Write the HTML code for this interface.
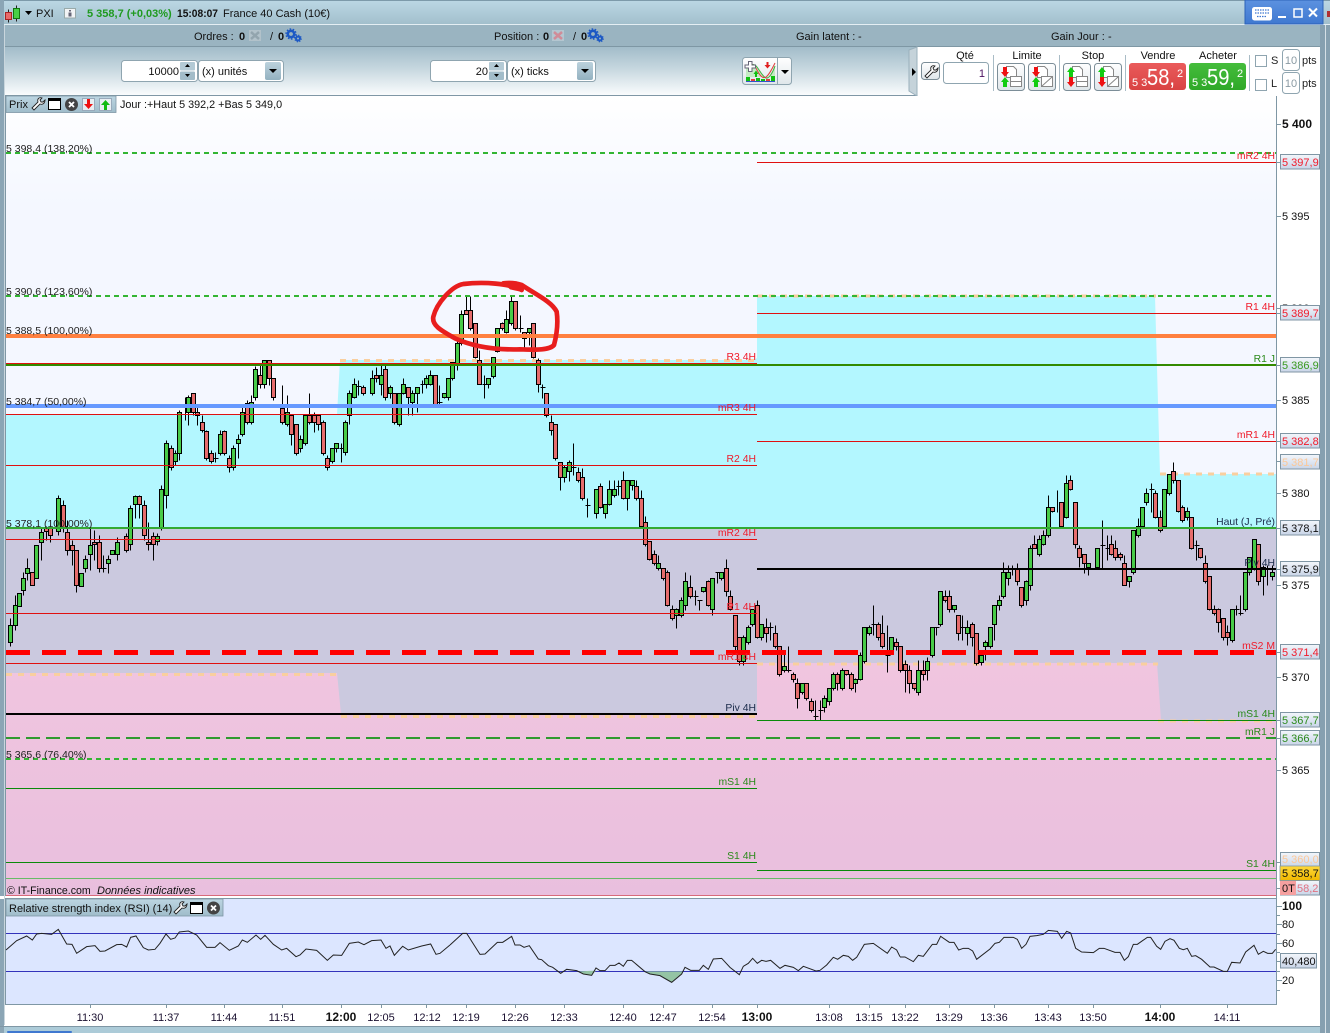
<!DOCTYPE html>
<html><head><meta charset="utf-8"><title>PXI</title>
<style>
html,body{margin:0;padding:0;background:#fff;width:1330px;height:1033px;overflow:hidden}
svg{display:block;font-family:"Liberation Sans",Arial,sans-serif;font-size:11px}
.b{font-weight:bold}
.r{fill:#f01a2a;text-anchor:end;font-size:10.4px}
.g{fill:#2a8a1a;text-anchor:end;font-size:10.4px}
.d{fill:#1a2a4a;text-anchor:end;font-size:10.4px}
.l{fill:#222;font-size:10.5px}
.t{text-anchor:middle;fill:#1a1030}
.c{text-anchor:middle;fill:#111}
.ax{fill:#111}
</style></head><body>
<svg width="1330" height="1033" viewBox="0 0 1330 1033" xmlns="http://www.w3.org/2000/svg">
<defs>
<linearGradient id="tb" x1="0" y1="0" x2="0" y2="1"><stop offset="0" stop-color="#bcd8e5"/><stop offset="1" stop-color="#a2bfcc"/></linearGradient>
<linearGradient id="tl" x1="0" y1="0" x2="0" y2="1"><stop offset="0" stop-color="#a2bcc9"/><stop offset=".45" stop-color="#c6d7df"/><stop offset="1" stop-color="#fafcfd"/></linearGradient>
<linearGradient id="tab" x1="0" y1="0" x2="0" y2="1"><stop offset="0" stop-color="#bdd6e2"/><stop offset="1" stop-color="#9fbcca"/></linearGradient>
<linearGradient id="btn" x1="0" y1="0" x2="0" y2="1"><stop offset="0" stop-color="#ffffff"/><stop offset="1" stop-color="#dfe6ea"/></linearGradient>
<linearGradient id="dd" x1="0" y1="0" x2="0" y2="1"><stop offset="0" stop-color="#bcd2dd"/><stop offset="1" stop-color="#93b1c0"/></linearGradient>
<linearGradient id="rb" x1="0" y1="0" x2="0" y2="1"><stop offset="0" stop-color="#ea5b5b"/><stop offset="1" stop-color="#d94343"/></linearGradient>
<linearGradient id="gb" x1="0" y1="0" x2="0" y2="1"><stop offset="0" stop-color="#45bd3c"/><stop offset="1" stop-color="#2fa828"/></linearGradient>
<linearGradient id="bx" x1="0" y1="0" x2="0" y2="1"><stop offset="0" stop-color="#f3f6fb"/><stop offset="1" stop-color="#c9d5e8"/></linearGradient>
<linearGradient id="bg" x1="0" y1="0" x2="0" y2="1"><stop offset="0" stop-color="#ffffff"/><stop offset="1" stop-color="#f4f7ff"/></linearGradient>
<linearGradient id="pk" x1="0" y1="0" x2="0" y2="1"><stop offset="0" stop-color="#f0c5df"/><stop offset="1" stop-color="#e9bfde"/></linearGradient>
<linearGradient id="blue" x1="0" y1="0" x2="0" y2="1"><stop offset="0" stop-color="#5c92e0"/><stop offset="1" stop-color="#3f78d0"/></linearGradient>
<linearGradient id="yl" x1="0" y1="0" x2="0" y2="1"><stop offset="0" stop-color="#ffd83a"/><stop offset="1" stop-color="#f0b800"/></linearGradient>
</defs>

<!-- window chrome -->
<rect width="1330" height="1033" fill="#fff"/>
<rect width="1330" height="24" fill="url(#tb)"/>
<rect y="24" width="1330" height="1" fill="#e4eef3"/>
<rect y="25" width="1330" height="21" fill="#9ab4c1"/>
<rect y="46" width="1330" height="1" fill="#7e97a4"/>
<rect y="47" width="1330" height="48" fill="url(#tl)"/>
<rect y="95" width="1276" height="1" fill="#7f97a5"/>
<rect x="0" y="0" width="1330" height="1" fill="#7d9aaa"/>
<rect x="0" y="0" width="4" height="1033" fill="#8ba5b5"/>
<rect x="4" y="25" width="1" height="1000" fill="#c9d6dd"/>
<rect x="1320" y="25" width="10" height="1008" fill="#86a0b0"/>
<rect x="1325" y="25" width="1" height="1008" fill="#d5e0e6"/>

<!-- right white panel -->
<path d="M909 50l9-3h402v49H918l-9-5z" fill="#fff"/>
<path d="M909 50l8-3v49l-8-5z" fill="#c5d3da" stroke="#9ab0bc"/>
<path d="M912 68l4 4-4 4z" fill="#000"/>
<rect x="1276" y="96" width="44" height="937" fill="#fff"/>

<!-- header text -->
<g>
<path d="M8.500 9.500v13M16.500 5.500v16" stroke="#222" stroke-width="1"/>
<rect x="5.500" y="12.500" width="6" height="7" fill="#e86a6a" stroke="#a22"/>
<rect x="13.500" y="8.500" width="6" height="10" fill="#47d047" stroke="#171"/>
<path d="M25 11h7l-3.500 4z" fill="#000"/>
<rect x="64.500" y="8.500" width="11" height="9.500" fill="#f2f4f5" stroke="#9aa"/>
<rect x="69" y="10" width="2" height="1.500" fill="#667"/><rect x="68.500" y="12.500" width="3" height="4" fill="#667"/>
<text x="36" y="17" fill="#111">PXI</text>
<text x="87" y="17" class="b" fill="#1f9a1f">5 358,7 (+0,03%)</text>
<text x="177" y="17" class="b" fill="#111" textLength="41" lengthAdjust="spacingAndGlyphs">15:08:07</text>
<text x="223" y="17" fill="#111">France 40 Cash (10€)</text>
</g>

<!-- title buttons -->
<rect x="1245" y="0" width="78" height="24" fill="url(#blue)" stroke="#2c62b8"/>
<rect x="1252" y="7" width="20" height="13.500" rx="2.500" fill="#fff"/>
<path d="M1255 10h14M1255 13h14M1257 16.500h10" stroke="#3f78d0" stroke-width="1.200" stroke-dasharray="1.500 1"/>
<path d="M1278 17h8" stroke="#fff" stroke-width="2"/>
<rect x="1294" y="9" width="8" height="8" fill="none" stroke="#fff" stroke-width="1.500"/>
<path d="M1309 8.500l8 8M1317 8.500l-8 8" stroke="#fff" stroke-width="2"/>
<rect x="1327" y="11" width="3" height="6" fill="#b03030"/>

<!-- row 2 -->
<g fill="#111">
<text x="194" y="40">Ordres :</text><text x="239" y="40" class="b">0</text><text x="270" y="40">/</text><text x="278" y="40" class="b">0</text>
<text x="494" y="40">Position :</text><text x="543" y="40" class="b">0</text><text x="573" y="40">/</text><text x="581" y="40" class="b">0</text>
<text x="796" y="40">Gain latent :</text><text x="858" y="40">-</text>
<text x="1051" y="40">Gain Jour :</text><text x="1108" y="40">-</text>
</g>
<rect x="249" y="30" width="12" height="11" fill="#b2c2ca"/>
<path d="M251 32l8 7M259 32l-8 7" stroke="#93a5ae" stroke-width="2.500"/>
<rect x="552" y="30" width="12" height="11" fill="#b4c6d0"/>
<path d="M554 32l8 7M562 32l-8 7" stroke="#d08c98" stroke-width="2.500"/>
<g fill="none" stroke="#1c58c4">
<circle cx="291" cy="34" r="3.200" stroke-width="2.600"/><circle cx="291" cy="34" r="5" stroke-width="1.400" stroke-dasharray="1.600 1.540"/>
<circle cx="298" cy="38.500" r="2" stroke-width="2"/><circle cx="298" cy="38.500" r="3.300" stroke-width="1.100" stroke-dasharray="1.300 1.300"/>
<circle cx="593" cy="34" r="3.200" stroke-width="2.600"/><circle cx="593" cy="34" r="5" stroke-width="1.400" stroke-dasharray="1.600 1.540"/>
<circle cx="600" cy="38.500" r="2" stroke-width="2"/><circle cx="600" cy="38.500" r="3.300" stroke-width="1.100" stroke-dasharray="1.300 1.300"/>
</g>

<!-- row 3 left inputs -->
<rect x="121.500" y="60.500" width="76" height="21" rx="3" fill="#fff" stroke="#8fa5b0"/>
<text x="179" y="75" text-anchor="end" fill="#111">10000</text>
<rect x="180" y="62" width="15" height="8.500" rx="1" fill="#b4cad5"/><rect x="180" y="71.500" width="15" height="8.500" rx="1" fill="#a2bcc9"/>
<path d="M185 67h5l-2.500-3zM185 74h5l-2.500 3z" fill="#000"/>
<rect x="198.500" y="60.500" width="85" height="21" rx="3" fill="#fff" stroke="#8fa5b0"/>
<text x="202" y="75" fill="#111">(x) unités</text>
<rect x="265" y="62" width="16" height="18" rx="2" fill="url(#dd)"/>
<path d="M269 69h8l-4 4z" fill="#000"/>
<rect x="430.500" y="60.500" width="76" height="21" rx="3" fill="#fff" stroke="#8fa5b0"/>
<text x="488" y="75" text-anchor="end" fill="#111">20</text>
<rect x="489" y="62" width="15" height="8.500" rx="1" fill="#b4cad5"/><rect x="489" y="71.500" width="15" height="8.500" rx="1" fill="#a2bcc9"/>
<path d="M494 67h5l-2.500-3zM494 74h5l-2.500 3z" fill="#000"/>
<rect x="507.500" y="60.500" width="88" height="21" rx="3" fill="#fff" stroke="#8fa5b0"/>
<text x="511" y="75" fill="#111">(x) ticks</text>
<rect x="577" y="62" width="16" height="18" rx="2" fill="url(#dd)"/>
<path d="M581 69h8l-4 4z" fill="#000"/>

<!-- indicator button -->
<rect x="742.500" y="57.500" width="49" height="27" rx="3" fill="url(#btn)" stroke="#8fa5b0"/>
<path d="M777.500 58v26" stroke="#8fa5b0"/>
<path d="M781 70h8l-4 4z" fill="#000"/>
<path d="M746 68c4-4 8-5 11-1s6 10 9 11 7-6 9-12v11h-29z" fill="#c4ecc4" stroke="none"/>
<path d="M746 68c4-4 8-5 11-1s6 10 9 11 7-6 9-12" fill="none" stroke="#3cb03c"/>
<path d="M746 66c5-3 8-2 11 4s6 9 9 7 6-8 9-14" fill="none" stroke="#e04040"/>
<path d="M746 81.500h29" stroke="#3355cc"/>
<path d="M746 77h4v4h-4zM756 78h4v3h-4zM761 79h4v2h-4zM771 76h4v5h-4z" fill="#10c010"/>
<path d="M751 79h4v2h-4zM766 79h4v2h-4z" fill="#e04040"/>
<path d="M748.500 61.500h3.500v3.500h3.500v3h-3.500v3.500h-3.500v-3.500h-3.500v-3h3.500z" fill="#fff" stroke="#667"/>
<path d="M755 77v-3h-1.500l2.500-3.500 2.500 3.500h-1.500v3z" fill="#10c010"/>
<path d="M766.500 62v3h-2l3 3.500 3-3.500h-2v-3z" fill="#e02020"/>

<!-- order panel -->
<rect x="921.500" y="62.500" width="18" height="17" rx="3" fill="url(#btn)" stroke="#7c8e98"/>
<path d="M925 76l6-6c-1-3 1-5 4-4l-2 2 1 2 2 0 2-2c0 3-2 5-5 4l-6 6z" fill="#fff" stroke="#222" stroke-width=".9"/>
<g fill="#111" text-anchor="middle">
<text x="965" y="59">Qté</text><text x="1027" y="59">Limite</text><text x="1093" y="59">Stop</text><text x="1158" y="59">Vendre</text><text x="1218" y="59">Acheter</text>
</g>
<rect x="943.500" y="62.500" width="45" height="21" rx="3" fill="#fff" stroke="#8fa5b0"/>
<text x="985" y="77" text-anchor="end" fill="#4a1060">1</text>
<path d="M993.500 55v36M1059.500 55v36M1125.500 55v36M1249.500 55v36" stroke="#a9bcc6"/>
<g fill="url(#btn)" stroke="#7c8e98">
<rect x="997.500" y="63.500" width="27" height="27" rx="3"/><rect x="1028.500" y="63.500" width="27" height="27" rx="3"/>
<rect x="1063.500" y="63.500" width="27" height="27" rx="3"/><rect x="1094.500" y="63.500" width="27" height="27" rx="3"/>
</g>
<g fill="#fff" stroke="#888">
<path d="M1006.500 66.500h7l3 3v8h-10zM1037.500 66.500h7l3 3v8h-10zM1072.500 66.500h7l3 3v8h-10zM1103.500 66.500h7l3 3v8h-10z"/>
<rect x="1010.500" y="76.500" width="11" height="10"/><rect x="1076.500" y="76.500" width="11" height="10"/>
<rect x="1041.500" y="76.500" width="11" height="10"/><rect x="1107.500" y="76.500" width="11" height="10"/>
</g>
<path d="M1011 81.500h10M1077 81.500h10" stroke="#888"/>
<path d="M1042 86l10-9M1108 86l10-9" stroke="#888"/>
<g fill="#ee1111"><path d="M1003 67h4v5h2l-4 5-4-5h2z"/><path d="M1034 67h4v5h2l-4 5-4-5h2z"/><path d="M1069 77h4v5h2l-4 5-4-5h2z"/><path d="M1100 77h4v5h2l-4 5-4-5h2z"/></g>
<g fill="#11cc11"><path d="M1003 87h4v-5h2l-4-5-4 5h2z"/><path d="M1034 87h4v-5h2l-4-5-4 5h2z"/><path d="M1069 77h4v-5h2l-4-5-4 5h2z"/><path d="M1100 77h4v-5h2l-4-5-4 5h2z"/></g>
<rect x="1129" y="63" width="57" height="27" rx="3" fill="url(#rb)"/>
<rect x="1189" y="63" width="57" height="27" rx="3" fill="url(#gb)"/>
<g fill="#fff">
<text x="1132" y="86" font-size="11">5 3</text><text x="1147" y="85" font-size="23" textLength="28" lengthAdjust="spacingAndGlyphs">58,</text><text x="1177" y="77" font-size="11">2</text>
<text x="1192" y="86" font-size="11">5 3</text><text x="1207" y="85" font-size="23" textLength="28" lengthAdjust="spacingAndGlyphs">59,</text><text x="1237" y="77" font-size="11">2</text>
</g>
<rect x="1255.500" y="55.500" width="11" height="11" fill="#fff" stroke="#8fa5b0"/>
<rect x="1255.500" y="79.500" width="11" height="11" fill="#fff" stroke="#8fa5b0"/>
<text x="1271" y="64" fill="#222">S</text><text x="1271" y="87" fill="#222">L</text>
<rect x="1282.500" y="49.500" width="17" height="21" rx="3" fill="#fff" stroke="#8fa5b0"/>
<rect x="1282.500" y="72.500" width="17" height="21" rx="3" fill="#fff" stroke="#8fa5b0"/>
<text x="1291" y="64" text-anchor="middle" fill="#8a9aa3">10</text><text x="1291" y="87" text-anchor="middle" fill="#8a9aa3">10</text>
<text x="1302" y="64" fill="#222">pts</text><text x="1302" y="87" fill="#222">pts</text>

<!-- chart background -->
<rect x="6" y="96" width="1270" height="800" fill="#f4f7ff"/>
<rect x="6" y="96" width="1270" height="110" fill="url(#bg)"/>
<path d="M6 415H337L340 360H757V296H1155L1160 474H1276V528H6z" fill="#b3f7ff"/>
<path d="M754 360l3-2v4z" fill="#b3f7ff"/>
<rect x="6" y="528" width="1270" height="368" fill="#cbc9df"/>
<path d="M6 673H337L341 714H757V663H1157L1161 720H1276V896H6z" fill="url(#pk)"/>
<rect x="5" y="96" width="1" height="908" fill="#7f97a5"/>
<rect x="1276" y="96" width="1" height="908" fill="#7f97a5"/>

<!-- orange dashed zone edges -->
<g stroke="#f9cf9f" stroke-width="3" stroke-dasharray="6 6" fill="none">
<path d="M340 360.500H757M757 296H1156M1160 474H1276M757 664H1158M6 674.500H338M341 716.500H757M1158 721H1276"/>
</g>

<!-- candles -->
<g transform="translate(.5 .5)" shape-rendering="crispEdges">
<path fill="none" stroke="#000" d="M10 618V646M15 595V630M23 572V595M27 558V580M41 528V560M46 526V540M50 525V542M58 495V535M63 500V532M67 520V555M72 540V565M76 550V592M85 555V572M90 527V570M94 530V560M99 535V572M103 555V572M108 555V573M117 537V560M126 533V552M130 505V550M135 495V518M139 495V518M144 500V540M148 522V550M153 532V560M157 533V545M161 485V530M166 440V508M171 445V470M175 450V465M179 410V460M185 397V420M188 395V425M193 393V415M197 405V425M202 415V432M206 430V460M211 450V463M215 452V462M220 430V455M224 430V455M229 455V472M233 445V470M238 434V458M242 407V436M247 400V424M251 395V424M255 366V400M260 365V388M264 360V388M269 360V385M273 378V400M282 385V424M287 395V426M291 415V445M296 424V455M300 435V452M305 415V445M309 393V424M314 412V432M318 415V430M323 420V455M327 455V470M332 448V463M336 443V452M341 443V462M345 420V455M349 390V424M354 378V398M358 380V395M363 385V395M372 370V395M376 367V382M381 363V395M385 365V400M390 385V398M394 393V424M399 393V426M403 378V394M408 387V415M412 390V415M417 393V412M422 380V393M426 375V388M430 370V385M435 375V405M439 385V405M444 393V398M448 378V400M452 362V380M457 340V370M461 310V345M466 296V312M470 296V330M475 323V358M479 350V384M484 375V398M488 378V388M493 357V378M497 328V352M502 322V330M506 310V333M511 296V325M515 301V330M520 315V332M524 332V348M529 328V345M533 323V358M538 358V392M542 384V398M546 393V417M551 415V435M555 424V460M560 462V490M564 465V482M569 460V481M573 443V475M578 467V482M582 468V500M587 498V517M596 489V518M600 483V508M605 504V518M609 480V505M614 480V497M618 480V495M623 471V499M627 480V510M632 480V490M636 480V500M641 490V527M645 516V546M649 541V560M654 550V565M658 555V570M663 568V580M667 570V606M672 605V620M676 608V628M681 597V617M685 572V610M690 575V598M695 590V605M699 600V610M703 587V592M708 580V606M712 578V615M717 572V583M721 572V580M726 559V596M730 590V610M735 615V650M739 640V665M743 635V665M748 625V644M752 610V626M757 600V638M761 624V640M766 618V642M770 622V640M775 625V648M779 646V676M784 650V672M788 646V672M793 672V682M797 678V708M802 683V694M806 683V700M811 698V712M815 700V720M820 700V720M824 695V712M829 688V705M833 672V690M837 672V690M842 668V690M846 670V675M851 672V690M855 678V692M860 652V680M864 627V663M869 625V635M873 605V635M878 622V640M882 615V648M887 625V672M891 637V652M896 638V650M900 646V672M905 660V692M909 665V693M914 683V690M918 660V695M923 660V680M927 657V680M932 627V657M936 627V635M940 591V626M945 590V602M949 590V612M954 605V612M958 615V640M962 615V640M967 620V645M972 622V646M976 633V665M981 655V665M985 640V660M990 627V648M994 605V640M999 595V610M1003 562V598M1008 565V585M1012 565V575M1017 563V585M1021 587V607M1026 580V605M1030 545V590M1034 535V548M1039 535V556M1043 530V545M1048 495V537M1052 507V512M1057 490V512M1061 502V528M1066 475V518M1070 475V490M1075 502V548M1079 545V567M1084 554V573M1088 563V575M1097 548V568M1102 520V568M1107 535V560M1111 535V555M1115 540V560M1120 552V560M1124 555V585M1129 576V587M1133 530V574M1138 518V537M1142 507V527M1146 488V505M1151 483V512M1155 490V518M1160 510V532M1164 489V528M1169 474V495M1173 462V483M1178 480V512M1182 505V522M1187 507V520M1191 517V549M1196 540V560M1200 548V558M1205 555V583M1209 576V610M1214 605V615M1218 608V632M1223 618V640M1227 625V645M1232 609V642M1236 605V615M1240 595V615M1245 572V611M1249 557V575M1254 539V570M1258 544V585M1263 565V595M1267 565V585M1272 565V580M101 568h5M213 458h5M339 448h5M356 386h5M420 384h5M437 402h5M482 384h5M518 328h5M540 387h5M571 467h5M585 505h5M616 486h5M693 596h5M697 600h5M715 572h5M768 627h5M786 670h5M813 716h5M818 710h5M871 624h5M885 655h5M934 627h5M960 627h5M1100 545h5M1105 548h5M1149 489h5M1194 545h5M1234 609h5M1238 613h5"/>
<path fill="#48cb48" stroke="#000" d="M8 625h4V642h-4zM13 605h4V625h-4zM17 593h4V606h-4zM21 578h4V590h-4zM25 568h4V573h-4zM34 545h4V578h-4zM39 532h4V542h-4zM56 498h4V531h-4zM79 573h4V586h-4zM83 559h4V568h-4zM88 545h4V554h-4zM106 559h4V563h-4zM110 550h4V554h-4zM115 542h4V554h-4zM128 508h4V544h-4zM133 496h4V504h-4zM155 536h4V541h-4zM159 489h4V527h-4zM164 443h4V495h-4zM173 453h4V461h-4zM177 412h4V453h-4zM186 397h4V412h-4zM218 434h4V453h-4zM231 448h4V467h-4zM236 439h4V443h-4zM240 412h4V434h-4zM249 402h4V422h-4zM253 369h4V397h-4zM262 360h4V384h-4zM285 412h4V424h-4zM298 439h4V448h-4zM303 415h4V443h-4zM330 448h4V461h-4zM334 443h4V448h-4zM343 422h4V452h-4zM347 393h4V415h-4zM352 384h4V397h-4zM370 378h4V393h-4zM379 375h4V384h-4zM388 387h4V393h-4zM397 393h4V424h-4zM401 384h4V393h-4zM410 393h4V402h-4zM415 387h4V393h-4zM424 378h4V384h-4zM428 375h4V384h-4zM442 393h4V397h-4zM446 378h4V397h-4zM450 362h4V378h-4zM455 343h4V363h-4zM459 314h4V343h-4zM486 378h4V384h-4zM491 357h4V376h-4zM495 328h4V351h-4zM504 319h4V332h-4zM509 301h4V323h-4zM527 328h4V332h-4zM562 467h4V477h-4zM567 462h4V471h-4zM594 489h4V513h-4zM603 504h4V513h-4zM607 489h4V504h-4zM612 489h4V495h-4zM625 480h4V498h-4zM630 480h4V485h-4zM656 563h4V568h-4zM674 609h4V615h-4zM679 600h4V615h-4zM683 581h4V605h-4zM701 587h4V591h-4zM710 578h4V609h-4zM719 572h4V578h-4zM741 637h4V661h-4zM746 627h4V642h-4zM750 609h4V624h-4zM759 624h4V637h-4zM782 666h4V670h-4zM800 683h4V692h-4zM822 698h4V707h-4zM827 688h4V701h-4zM831 674h4V688h-4zM840 670h4V688h-4zM853 679h4V683h-4zM858 655h4V679h-4zM862 627h4V661h-4zM867 627h4V633h-4zM889 637h4V650h-4zM916 670h4V692h-4zM925 661h4V670h-4zM930 627h4V655h-4zM938 591h4V624h-4zM952 605h4V609h-4zM965 627h4V633h-4zM979 655h4V662h-4zM983 642h4V646h-4zM988 627h4V646h-4zM992 605h4V624h-4zM997 600h4V605h-4zM1001 572h4V596h-4zM1006 572h4V578h-4zM1024 581h4V600h-4zM1028 548h4V585h-4zM1037 539h4V554h-4zM1041 535h4V544h-4zM1046 507h4V535h-4zM1064 483h4V517h-4zM1086 563h4V567h-4zM1095 548h4V567h-4zM1127 576h4V581h-4zM1131 530h4V572h-4zM1136 526h4V535h-4zM1140 507h4V526h-4zM1144 493h4V502h-4zM1162 489h4V526h-4zM1167 474h4V493h-4zM1185 511h4V517h-4zM1230 609h4V640h-4zM1243 572h4V609h-4zM1247 557h4V572h-4zM1252 539h4V569h-4zM1261 567h4V576h-4zM1270 572h4V576h-4z"/>
<path fill="#e66c6c" stroke="#000" d="M30 572h4V585h-4zM44 527h4V531h-4zM48 528h4V535h-4zM61 505h4V528h-4zM65 532h4V550h-4zM70 545h4V550h-4zM74 550h4V585h-4zM92 542h4V544h-4zM97 542h4V568h-4zM124 536h4V550h-4zM137 496h4V504h-4zM142 505h4V535h-4zM146 542h4V544h-4zM151 536h4V544h-4zM169 448h4V467h-4zM191 393h4V412h-4zM195 412h4V415h-4zM200 422h4V430h-4zM204 431h4V458h-4zM209 453h4V461h-4zM222 431h4V453h-4zM227 458h4V467h-4zM245 403h4V422h-4zM258 375h4V384h-4zM267 360h4V378h-4zM271 378h4V397h-4zM280 408h4V422h-4zM289 415h4V434h-4zM294 424h4V453h-4zM307 415h4V422h-4zM312 415h4V422h-4zM316 415h4V424h-4zM321 422h4V453h-4zM325 458h4V467h-4zM361 387h4V393h-4zM374 375h4V378h-4zM383 369h4V397h-4zM392 393h4V422h-4zM406 387h4V397h-4zM433 375h4V405h-4zM464 310h4V314h-4zM468 310h4V328h-4zM473 323h4V357h-4zM477 360h4V384h-4zM500 323h4V328h-4zM513 301h4V328h-4zM522 332h4V338h-4zM531 323h4V357h-4zM536 360h4V384h-4zM544 393h4V415h-4zM549 422h4V430h-4zM553 424h4V458h-4zM558 462h4V477h-4zM576 472h4V480h-4zM580 477h4V498h-4zM598 486h4V507h-4zM621 480h4V498h-4zM634 486h4V498h-4zM639 498h4V526h-4zM643 522h4V544h-4zM647 541h4V559h-4zM652 554h4V563h-4zM661 568h4V578h-4zM665 572h4V605h-4zM670 609h4V618h-4zM688 587h4V596h-4zM706 581h4V605h-4zM724 568h4V591h-4zM728 596h4V609h-4zM733 615h4V646h-4zM737 637h4V661h-4zM755 605h4V637h-4zM764 627h4V633h-4zM773 633h4V646h-4zM777 646h4V674h-4zM791 674h4V679h-4zM795 683h4V698h-4zM804 683h4V698h-4zM809 701h4V710h-4zM835 674h4V683h-4zM844 670h4V674h-4zM849 674h4V688h-4zM876 624h4V637h-4zM880 633h4V646h-4zM894 642h4V646h-4zM898 646h4V670h-4zM903 664h4V670h-4zM907 670h4V683h-4zM912 683h4V688h-4zM921 670h4V674h-4zM943 596h4V600h-4zM947 596h4V609h-4zM956 615h4V633h-4zM970 624h4V637h-4zM974 633h4V663h-4zM1015 569h4V581h-4zM1019 587h4V605h-4zM1032 544h4V548h-4zM1050 507h4V511h-4zM1059 502h4V526h-4zM1068 480h4V489h-4zM1073 502h4V544h-4zM1077 548h4V557h-4zM1082 554h4V563h-4zM1109 544h4V554h-4zM1113 548h4V557h-4zM1118 554h4V557h-4zM1122 563h4V585h-4zM1153 493h4V517h-4zM1158 517h4V530h-4zM1171 471h4V480h-4zM1176 480h4V511h-4zM1180 507h4V520h-4zM1189 517h4V548h-4zM1198 548h4V557h-4zM1203 563h4V581h-4zM1207 576h4V609h-4zM1212 609h4V613h-4zM1216 609h4V622h-4zM1221 618h4V637h-4zM1225 632h4V637h-4zM1256 544h4V581h-4z"/>
</g>

<!-- horizontal levels -->
<g fill="none" shape-rendering="crispEdges">
<path d="M6 153H1276" stroke="#33b533" stroke-width="2" stroke-dasharray="5 4"/>
<path d="M6 296H1272" stroke="#33b533" stroke-width="2" stroke-dasharray="5 4"/>
<path d="M6 759H1276" stroke="#33b533" stroke-width="2" stroke-dasharray="5 4"/>
<path d="M6 738H1276" stroke="#2f9a2f" stroke-width="2" stroke-dasharray="14 6"/>
<path d="M6 336H1276" stroke="#ff8040" stroke-width="4"/>
<path d="M6 365H1276" stroke="#338a00" stroke-width="2"/>
<path d="M757 162.500H1276M757 313.500H1276M757 441.500H1276M6 414.500H757M6 465.500H757M6 539.500H757M6 613.500H757M6 663.500H757M6 363.500H757" stroke="#e01010"/>
<path d="M6 406H1276" stroke="#6699ff" stroke-width="4"/>
<path d="M6 528H1276" stroke="#33aa33" stroke-width="2"/>
<path d="M757 569H1276" stroke="#000" stroke-width="2"/>
<path d="M6 714H757" stroke="#000" stroke-width="2"/>
<path d="M757 720.500H1276M6 788.500H757M6 862.500H757M757 870.500H1276" stroke="#0a8a0a"/>
<path d="M6 878.500H1276" stroke="#66bb66"/>
<path d="M6 652.500H1276" stroke="#ff0000" stroke-width="5" stroke-dasharray="24 12"/>
</g>
<rect x="6" y="895" width="1270" height="1" fill="#d86a7a"/>

<!-- red hand-drawn circle -->
<g transform="translate(340 280) scale(.33333)">
<path d="M545 30C510 10 430 5 370 12 335 18 290 70 280 110 275 135 300 150 345 175 400 200 470 210 540 208 590 210 630 210 642 195 650 165 655 130 650 95 635 65 590 45 545 15 525 8 505 8 490 10" fill="none" stroke="#e81e1e" stroke-width="14" stroke-linecap="round" stroke-linejoin="round"/>
<path d="M488 8L530 4 552 20 546 36 510 28z" fill="#e81e1e"/>
</g>

<!-- level text -->
<text x="6" y="152" class="l">5 398,4 (138,20%)</text>
<text x="6" y="295" class="l">5 390,6 (123,60%)</text>
<text x="6" y="334" class="l">5 388,5 (100,00%)</text>
<text x="6" y="405" class="l">5 384,7 (50,00%)</text>
<text x="6" y="527" class="l">5 378,1 (100,00%)</text>
<text x="6" y="758" class="l">5 365,6 (76,40%)</text>
<text x="756" y="360" class="r">R3 4H</text>
<text x="756" y="411" class="r">mR3 4H</text>
<text x="756" y="462" class="r">R2 4H</text>
<text x="756" y="536" class="r">mR2 4H</text>
<text x="756" y="610" class="r">R1 4H</text>
<text x="756" y="660" class="r">mR1 4H</text>
<text x="756" y="711" class="d">Piv 4H</text>
<text x="756" y="785" class="g">mS1 4H</text>
<text x="756" y="859" class="g">S1 4H</text>
<text x="1275" y="159" class="r">mR2 4H</text>
<text x="1275" y="310" class="r">R1 4H</text>
<text x="1275" y="362" class="g">R1 J</text>
<text x="1275" y="438" class="r">mR1 4H</text>
<text x="1275" y="525" class="d">Haut (J, Pré)</text>
<text x="1275" y="566" class="d">Piv 4H</text>
<text x="1275" y="649" class="r">mS2 M</text>
<text x="1275" y="717" class="g">mS1 4H</text>
<text x="1275" y="735" class="g">mR1 J</text>
<text x="1275" y="867" class="g">S1 4H</text>
<text x="7" y="894" fill="#111" font-size="10.6">© IT-Finance.com</text><text x="97" y="894" fill="#111" font-style="italic">Données indicatives</text>

<!-- axis -->
<g stroke="#7f97a5" shape-rendering="crispEdges">
<path d="M1277 124.500h4M1277 216.500h4M1277 308.500h4M1277 400.500h4M1277 493.500h4M1277 585.500h4M1277 677.500h4M1277 770.500h4M1277 162.500h4M1277 313.500h4M1277 365.500h4M1277 441.500h4M1277 461.500h4M1277 528.500h4M1277 569.500h4M1277 652.500h4M1277 720.500h4M1277 738.500h4M1277 862.500h4M1277 888.500h4"/>
</g>
<text x="1282" y="128" class="b ax" font-size="12">5 400</text>
<text x="1282" y="220" class="ax">5 395</text>
<text x="1282" y="312" class="ax">5 390</text>
<text x="1282" y="404" class="ax">5 385</text>
<text x="1282" y="497" class="ax">5 380</text>
<text x="1282" y="589" class="ax">5 375</text>
<text x="1282" y="681" class="ax">5 370</text>
<text x="1282" y="774" class="ax">5 365</text>

<g stroke="#8096a4" fill="url(#bx)">
<rect x="1280.500" y="154.500" width="39" height="14.500"/>
<rect x="1280.500" y="305.500" width="39" height="14.500"/>
<rect x="1280.500" y="357.500" width="39" height="14.500"/>
<rect x="1280.500" y="433.500" width="39" height="14.500"/>
<rect x="1280.500" y="454.500" width="39" height="14.500"/>
<rect x="1280.500" y="520.500" width="39" height="14.500"/>
<rect x="1280.500" y="561.500" width="39" height="14.500"/>
<rect x="1280.500" y="644.500" width="39" height="14.500"/>
<rect x="1280.500" y="712.500" width="39" height="14.500"/>
<rect x="1280.500" y="730.500" width="39" height="14.500"/>
<rect x="1280.500" y="852.500" width="39" height="14.500"/>
<rect x="1280.500" y="880.500" width="39" height="14.500"/>
</g>
<rect x="1280" y="866" width="40" height="14.500" fill="url(#yl)" stroke="#8096a4" stroke-width=".8"/>
<rect x="1280" y="881" width="16" height="14" fill="#f5a0a0"/>
<g>
<text x="1282" y="166" fill="#f01a2a">5 397,9</text>
<text x="1282" y="317" fill="#f01a2a">5 389,7</text>
<text x="1282" y="369" fill="#3a9a20">5 386,9</text>
<text x="1282" y="445" fill="#f01a2a">5 382,8</text>
<text x="1282" y="466" fill="#fcc898">5 381,7</text>
<text x="1282" y="532" fill="#111">5 378,1</text>
<text x="1282" y="573" fill="#111">5 375,9</text>
<text x="1282" y="656" fill="#f01a2a">5 371,4</text>
<text x="1282" y="724" fill="#2a8a1a">5 367,7</text>
<text x="1282" y="742" fill="#2a8a1a">5 366,7</text>
<text x="1282" y="863" fill="#fcc898">5 360,0</text>
<text x="1282" y="877" fill="#111">5 358,7</text>
<text x="1282" y="892" fill="#111">0T</text>
<text x="1297" y="892" fill="#e07080">58,2</text>
</g>

<!-- price tab -->
<rect x="6" y="96" width="110" height="16.500" fill="url(#tab)" stroke="#7f97a5" stroke-width=".8"/>
<text x="9" y="108" fill="#111">Prix</text>
<path d="M32 108l6-6c-1-3 1-5 4-4l-2 2 1 2 2 0 2-2c0 3-2 5-5 4l-6 6z" fill="#fff" stroke="#222" stroke-width=".9"/>
<rect x="48.500" y="98.500" width="12" height="11" fill="#fff" stroke="#000"/><rect x="48" y="98" width="13" height="3" fill="#000"/>
<circle cx="71.500" cy="104.500" r="6.500" fill="#444"/><path d="M69 102l5 5M74 102l-5 5" stroke="#fff" stroke-width="1.800"/>
<rect x="82.500" y="98.500" width="12" height="12" fill="#e8eef2" stroke="#9ab"/><path d="M87 99h3v5h3l-4.500 5-4.500-5h3z" fill="#ee1111"/>
<rect x="99.500" y="98.500" width="12" height="12" fill="#e8eef2" stroke="#9ab"/><path d="M104 110h3v-5h3l-4.500-5-4.500 5h3z" fill="#11bb11"/>
<text x="120" y="108" fill="#111" font-size="10.8">Jour :+Haut 5 392,2 +Bas 5 349,0</text>

<!-- RSI panel -->
<rect x="0" y="896" width="1276" height="3" fill="#fff"/>
<rect x="4" y="896" width="1" height="108" fill="#c9d6dd"/>
<rect x="5" y="898" width="1272" height="1" fill="#7f97a5"/>
<rect x="6" y="899" width="1270" height="105" fill="#dce6ff"/>
<rect x="5" y="899" width="1" height="105" fill="#7f97a5"/>
<rect x="1276" y="899" width="1" height="105" fill="#7f97a5"/>
<rect x="5" y="1004" width="1272" height="1" fill="#7f97a5"/>
<path d="M6 933.500H1276M6 971.500H1276" stroke="#3333bb" shape-rendering="crispEdges"/>
<g transform="translate(450 890) scale(.33333)" fill="#94c4a4">
<path d="M385 244L400 252 425 256 438 242z"/><path d="M585 244L600 252 630 257 665 277 695 252 700 244z"/>
</g>
<g fill="none" stroke="#222" stroke-width="3">
<path transform="translate(0 850) scale(.33333)" d="M18 300L50 272 80 258 97 270 110 252 125 250 155 253 175 238 200 282 216 283 230 310 260 290 285 287 300 304 315 303 350 284 365 283 380 291 392 262 408 258 430 293 445 300 465 298 480 280 498 252 512 268 525 264 538 246 565 243 590 255 620 292 645 292 660 278 688 301 715 288 727 270 742 277 768 255 782 268 795 256 820 283 845 300 860 295 888 320 900 315 918 297 950 301 982 331 1000 315 1025 316 1048 280 1075 276 1092 284 1115 272 1143 270 1158 295 1170 288 1183 316 1208 289 1225 300 1265 288 1292 282 1308 313 1320 310 1350 285"/>
<path transform="translate(450 890) scale(.33333)" d="M0 165L38 130 50 130 90 193 105 192 142 157 158 157 185 139 195 165 210 165 222 172 238 167 265 207 275 209 295 227 308 232 332 250 350 238 380 242 400 252 425 256 438 234 450 242 465 242 480 226 495 226 507 219 520 229 532 211 545 211 585 245 600 252 630 257 665 277 695 252 705 232 722 241 748 241 760 226 775 238 790 207 815 205 840 232 868 254 880 229 895 220 908 205 922 220 935 211 948 214 962 211 990 235 1005 226 1030 232 1045 242 1060 229 1098 243 1110 241 1130 225 1150 202 1163 208 1180 196 1195 199 1208 211 1220 202 1243 163 1270 160 1312 190 1325 171 1340 180 1350 200"/>
<path transform="translate(900 840) scale(.33333)" d="M0 351L15 351 40 365 55 346 70 349 97 313 110 313 122 289 148 307 162 307 176 330 190 325 205 325 218 333 230 358 270 327 285 310 298 307 312 292 340 292 352 298 365 325 378 313 390 289 410 287 430 283 445 271 472 274 485 295 500 274 512 279 527 325 545 336 580 338 598 325 612 325 645 337 660 337 673 361 685 350 700 313 712 313 742 292 752 292 770 319 782 328 795 304 810 296 822 301 838 325 850 329 862 325 875 349 887 347 905 358 930 381 942 381 970 394 982 394 995 367 1020 369 1037 336 1062 316 1075 343 1090 334 1103 340 1117 340 1127 328"/>
</g>
<rect x="6" y="899" width="217" height="17" fill="url(#tab)" stroke="#7f97a5" stroke-width=".8"/>
<text x="9" y="912" fill="#111">Relative strength index (RSI) (14)</text>
<path d="M174 912l6-6c-1-3 1-5 4-4l-2 2 1 2 2 0 2-2c0 3-2 5-5 4l-6 6z" fill="#fff" stroke="#222" stroke-width=".9"/>
<rect x="190.500" y="902.500" width="12" height="11" fill="#fff" stroke="#000"/><rect x="190" y="902" width="13" height="3" fill="#000"/>
<circle cx="213.500" cy="908" r="6.500" fill="#444"/><path d="M211 905.500l5 5M216 905.500l-5 5" stroke="#fff" stroke-width="1.800"/>

<path d="M1277 906.500h5M1277 915.500h3M1277 924.500h5M1277 934.500h3M1277 943.500h5M1277 952.500h3M1277 961.500h5M1277 971.500h3M1277 980.500h5M1277 990.500h3" stroke="#7f97a5" shape-rendering="crispEdges"/>
<text x="1282" y="910" class="b ax" font-size="12">100</text>
<text x="1282" y="928" class="ax">80</text>
<text x="1282" y="947" class="ax">60</text>
<text x="1282" y="984" class="ax">20</text>
<rect x="1280.500" y="953.500" width="36" height="14.500" fill="url(#bx)" stroke="#8096a4"/>
<text x="1282" y="965" class="ax">40,480</text>

<!-- time axis -->
<rect x="5" y="1005" width="1315" height="21" fill="#fff"/>
<path d="M90.500 1005v3M166.500 1005v3M224.500 1005v3M282.500 1005v3M341.500 1005v3M381.500 1005v3M426.500 1005v3M466.500 1005v3M515.500 1005v3M564.500 1005v3M623.500 1005v3M663.500 1005v3M712.500 1005v3M757.500 1005v3M829.500 1005v3M869.500 1005v3M905.500 1005v3M949.500 1005v3M994.500 1005v3M1048.500 1005v3M1093.500 1005v3M1160.500 1005v3M1227.500 1005v3" stroke="#7f97a5"/>
<text x="90" y="1021" class="t">11:30</text><text x="166" y="1021" class="t">11:37</text><text x="224" y="1021" class="t">11:44</text><text x="282" y="1021" class="t">11:51</text>
<text x="341" y="1021" class="t b" font-size="12" style="fill:#111">12:00</text>
<text x="381" y="1021" class="t">12:05</text><text x="427" y="1021" class="t">12:12</text><text x="466" y="1021" class="t">12:19</text><text x="515" y="1021" class="t">12:26</text><text x="564" y="1021" class="t">12:33</text><text x="623" y="1021" class="t">12:40</text><text x="663" y="1021" class="t">12:47</text><text x="712" y="1021" class="t">12:54</text>
<text x="757" y="1021" class="t b" font-size="12" style="fill:#111">13:00</text>
<text x="829" y="1021" class="t">13:08</text><text x="869" y="1021" class="t">13:15</text><text x="905" y="1021" class="t">13:22</text><text x="949" y="1021" class="t">13:29</text><text x="994" y="1021" class="t">13:36</text><text x="1048" y="1021" class="t">13:43</text><text x="1093" y="1021" class="t">13:50</text>
<text x="1160" y="1021" class="t b" font-size="12" style="fill:#111">14:00</text>
<text x="1227" y="1021" class="t">14:11</text>

<!-- bottom -->
<rect x="0" y="1026" width="1320" height="1" fill="#7f97a5"/>
<rect x="0" y="1027" width="1320" height="6" fill="#accbd8"/>
<rect x="0" y="1027" width="4" height="6" fill="#8ba5b5"/>
<rect x="7" y="1031" width="65" height="2" rx="1" fill="#3f78d0"/>
</svg>
</body></html>
